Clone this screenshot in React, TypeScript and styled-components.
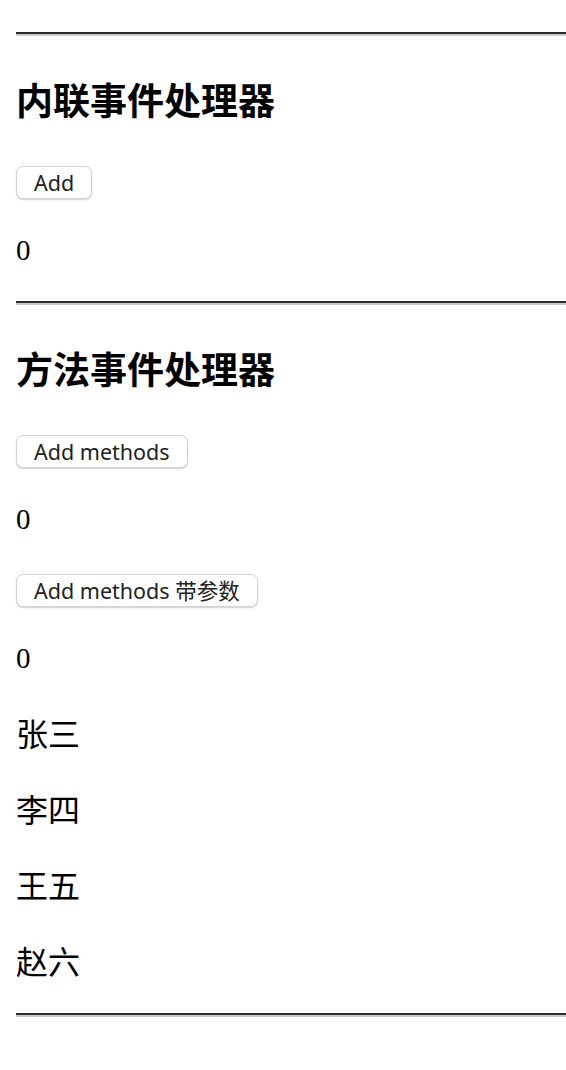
import React, { useState } from "react";
import styled, { createGlobalStyle } from "styled-components";

const GlobalStyle = createGlobalStyle`
  html, body {
    margin: 0;
    padding: 0;
    background: #ffffff;
  }
  body {
    font-family: "Liberation Serif", "Noto Sans CJK SC", serif;
    color: #000000;
  }
`;

const Page = styled.div`
  display: flex;
  flex-direction: column;
  align-items: flex-start;
  padding: 0 0 40px 16px;
  overflow: hidden;
`;

const Divider = styled.hr<{ $top: number }>`
  align-self: stretch;
  margin: ${(p) => p.$top}px 0 0 0;
  height: 0;
  border: none;
  border-top: 2px solid #2c2c2c;
  border-bottom: 2px solid #cecece;
`;

const Title = styled.h3`
  margin: 37px 0 0 0;
  font-family: "Noto Sans CJK SC", sans-serif;
  font-size: 37px;
  line-height: 52px;
  font-weight: 700;
  color: #000;
`;

const ActionButton = styled.button<{ $top: number }>`
  display: block;
  margin: ${(p) => p.$top}px 0 0 0;
  height: 33px;
  padding: 0 17px;
  background: #ffffff;
  border: 1px solid #d2d2d2;
  border-radius: 7px;
  box-shadow: 0 1px 1.5px rgba(0, 0, 0, 0.18);
  font-family: "Noto Sans", "Noto Sans CJK SC", sans-serif;
  font-size: 21.5px;
  line-height: 31px;
  color: #222222;
  cursor: pointer;
  white-space: nowrap;
`;

const Count = styled.p`
  margin: 31px 0 0 0;
  font-family: "Liberation Serif", serif;
  font-size: 29px;
  line-height: 40px;
  color: #000;
`;

const Name = styled.p`
  margin: 32px 0 0 0;
  font-family: "Noto Sans CJK SC", sans-serif;
  font-size: 32px;
  line-height: 44px;
  font-weight: 400;
  color: #000;
  cursor: pointer;
`;

const names = ["张三", "李四", "王五", "赵六"];

export default function App() {
  const [inline, setInline] = useState(0);
  const [method, setMethod] = useState(0);
  const [param, setParam] = useState(0);

  const addWith = (n: number) => setParam((v) => v + n);

  return (
    <>
      <GlobalStyle />
      <Page>
        <Divider $top={32} />
        <Title>内联事件处理器</Title>
        <ActionButton $top={41} onClick={() => setInline(inline + 1)}>
          Add
        </ActionButton>
        <Count>{inline}</Count>

        <Divider $top={31} />
        <Title>方法事件处理器</Title>
        <ActionButton $top={41} onClick={() => setMethod((v) => v + 1)}>
          Add methods
        </ActionButton>
        <Count>{method}</Count>
        <ActionButton $top={35} onClick={() => addWith(1)}>
          Add methods 带参数
        </ActionButton>
        <Count>{param}</Count>
        {names.map((n) => (
          <Name key={n}>{n}</Name>
        ))}
        <Divider $top={31} />
      </Page>
    </>
  );
}
